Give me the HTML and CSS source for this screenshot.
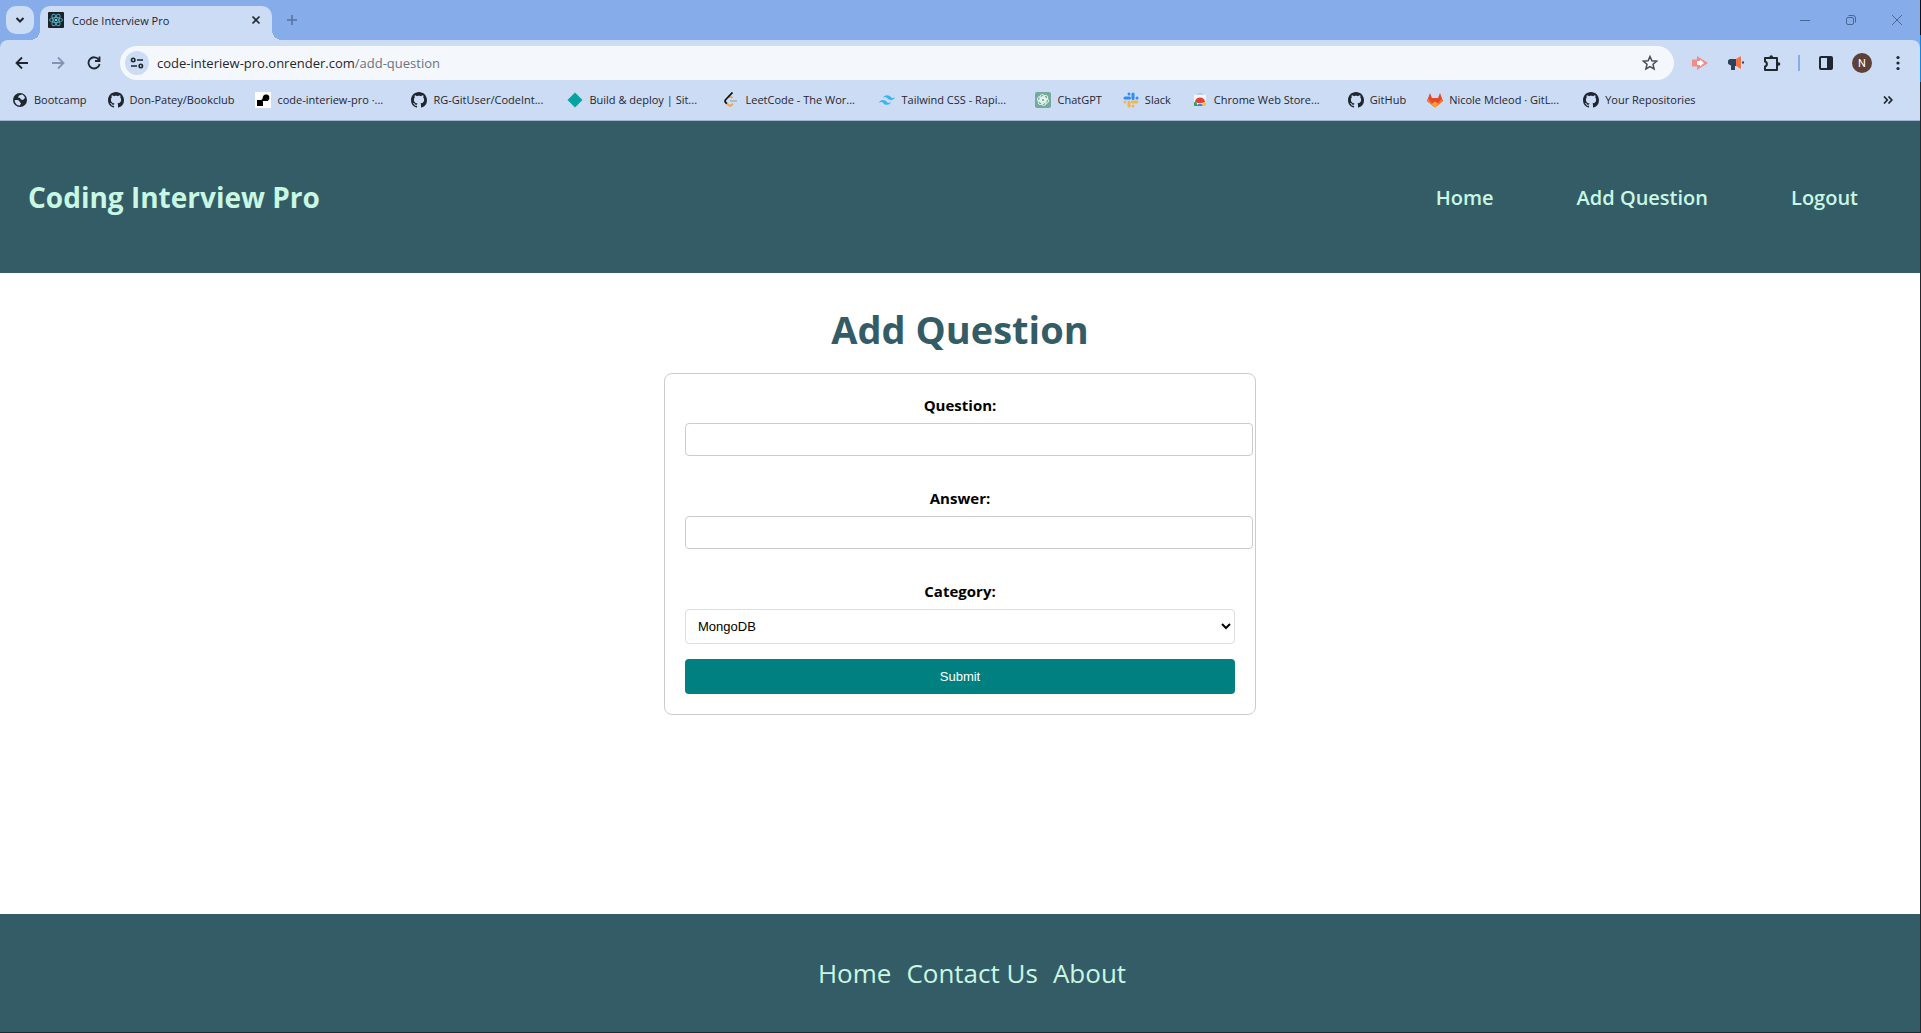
FILE: index.html
```html
<!DOCTYPE html>
<html lang="en">
<head>
<meta charset="utf-8">
<title>Code Interview Pro</title>
<link rel="stylesheet" href="styles.css">
</head>
<body>
<svg class="defs" aria-hidden="true">
  <symbol id="github" viewBox="0 0 16 16"><path fill="#1f2630" d="M8 0c4.42 0 8 3.58 8 8a8.013 8.013 0 0 1-5.45 7.59c-.4.08-.55-.17-.55-.38 0-.27.01-1.13.01-2.2 0-.75-.25-1.23-.54-1.48 1.78-.2 3.65-.88 3.65-3.95 0-.88-.31-1.59-.82-2.15.08-.2.36-1.02-.08-2.12 0 0-.67-.22-2.2.82-.64-.18-1.32-.27-2-.27-.68 0-1.36.09-2 .27-1.53-1.03-2.2-.82-2.2-.82-.44 1.1-.16 1.92-.08 2.12-.51.56-.82 1.28-.82 2.15 0 3.06 1.86 3.75 3.64 3.95-.23.2-.44.55-.51 1.07-.46.21-1.61.55-2.33-.66-.15-.24-.6-.83-1.23-.82-.67.01-.27.38.01.53.34.19.73.9.82 1.13.16.45.68 1.31 2.69.94 0 .67.01 1.3.01 1.49 0 .21-.15.45-.55.38A7.995 7.995 0 0 1 0 8c0-4.42 3.58-8 8-8Z"/></symbol>
</svg>

<div class="browser">
  <div class="tabstrip">
    <button class="tab-search" aria-label="Search tabs"><svg width="10" height="10" viewBox="0 0 10 10"><path d="M1.5 3 5 6.500 8.500 3" fill="none" stroke="#1f2630" stroke-width="2"/></svg></button>
    <div class="tab">
      <svg width="16" height="16" viewBox="0 0 16 16"><rect width="16" height="16" rx="1" fill="#1c2127"/><g fill="none" stroke="#4fa9bd" stroke-width="1"><ellipse cx="8" cy="8" rx="6.500" ry="2.500"/><ellipse cx="8" cy="8" rx="6.500" ry="2.500" transform="rotate(60 8 8)"/><ellipse cx="8" cy="8" rx="6.500" ry="2.500" transform="rotate(120 8 8)"/></g><circle cx="8" cy="8" r="1.300" fill="#6fd3e8"/></svg>
      <span class="tab-title">Code Interview Pro</span>
      <button class="icon-button" aria-label="Close tab"><svg width="10" height="10" viewBox="0 0 10 10"><path d="M1.500 1.500l7 7M8.500 1.500l-7 7" stroke="#1f2630" stroke-width="1.600"/></svg></button>
    </div>
    <button class="icon-button new-tab" aria-label="New tab"><svg width="10" height="10" viewBox="0 0 10 10"><path d="M5 0v10M0 5h10" stroke="#56749f" stroke-width="1.500"/></svg></button>
    <div class="window-controls">
      <button class="icon-button" aria-label="Minimize"><svg width="10" height="10" viewBox="0 0 10 10"><path d="M0 5.500h10" stroke="#4a6694"/></svg></button>
      <button class="icon-button" aria-label="Restore"><svg width="10" height="10" viewBox="0 0 10 10" fill="none" stroke="#4a6694"><rect x=".5" y="2.500" width="7" height="7" rx="1.500"/><path d="M2.500.5H7A2.500 2.500 0 0 1 9.500 3v4.500"/></svg></button>
      <button class="icon-button" aria-label="Close"><svg width="10" height="10" viewBox="0 0 10 10"><path d="M0 0l10 10M10 0 0 10" stroke="#4a6694"/></svg></button>
    </div>
  </div>

  <div class="toolbar">
    <div class="nav-buttons">
      <button class="icon-button" aria-label="Back"><svg width="14" height="14" viewBox="0 0 14 14"><path d="M13 7H2M7 1.500 1.500 7 7 12.500" fill="none" stroke="#1f2630" stroke-width="1.800"/></svg></button>
      <button class="icon-button" aria-label="Forward"><svg width="14" height="14" viewBox="0 0 14 14"><path d="M1 7h11M7 1.500 12.500 7 7 12.500" fill="none" stroke="#8394b2" stroke-width="1.800"/></svg></button>
      <button class="icon-button" aria-label="Reload"><svg width="14" height="14" viewBox="0 0 14 14"><path d="M11.800 3.800A5.600 5.600 0 1 0 12.600 8M12.500 0.500v4.500H8" fill="none" stroke="#1f2630" stroke-width="1.800"/></svg></button>
    </div>
    <div class="omnibox">
      <button class="site-info" aria-label="Site information"><svg width="14" height="12" viewBox="0 0 14 12" fill="none" stroke="#1f2630" stroke-width="1.600"><circle cx="3.200" cy="3" r="1.700"/><path d="M7 3h6M1 9h6"/><circle cx="10.800" cy="9" r="1.700"/></svg></button>
      <span class="url">code-interiew-pro.onrender.com<span class="url-path">/add-question</span></span>
      <button class="icon-button" aria-label="Bookmark this tab"><svg width="16" height="16" viewBox="0 0 16 16"><path d="M8 1.500l1.900 4.300 4.700.4-3.600 3.100 1.100 4.600L8 11.500l-4.100 2.400L5 9.300 1.400 6.200l4.700-.4z" fill="none" stroke="#454c57" stroke-width="1.500"/></svg></button>
    </div>
    <div class="extensions">
      <button class="icon-button" aria-label="Screen recorder"><svg width="16" height="14" viewBox="0 0 16 14"><path d="M5 0l11 7-11 7v-3.500H0v-7h5z" fill="#f48b8a"/><path d="M5 5h3V3.500L12 7l-4 3.500V9H5z" fill="#fff"/></svg></button>
      <button class="icon-button" aria-label="Announcements"><svg width="16" height="16" viewBox="0 0 16 16"><path d="M8 4H3a3 3 0 0 0-2 5.500l2 1V15h4v-4h1z" fill="#2d405c"/><path d="M8 4l5-3v13l-5-3z" fill="#fb6f42"/><path d="M13 1h1v13h-1z" fill="#e8eaf0"/><path d="M14 6.500h2v2h-2z" fill="#2d405c"/></svg></button>
      <button class="icon-button" aria-label="Extensions"><svg width="18" height="18" viewBox="0 0 18 18"><path d="M2 4h12v12H2v-3.500c2.500-.5 2.500-4.500 0-5z" fill="none" stroke="#1f2630" stroke-width="2" stroke-linejoin="round"/><circle cx="8.200" cy="3" r="1.800" fill="#1f2630"/><circle cx="15.500" cy="10" r="1.800" fill="#1f2630"/></svg></button>
      <span class="divider"></span>
      <button class="icon-button" aria-label="Side panel"><svg width="14" height="14" viewBox="0 0 14 14"><rect x="1" y="1" width="12" height="12" rx="1" fill="none" stroke="#1f2630" stroke-width="2"/><path d="M8 1h5v12H8z" fill="#1f2630"/></svg></button>
      <button class="avatar" aria-label="Profile">N</button>
      <button class="icon-button" aria-label="Menu"><svg width="4" height="16" viewBox="0 0 4 16" fill="#1f2630"><circle cx="2" cy="2.500" r="1.600"/><circle cx="2" cy="8" r="1.600"/><circle cx="2" cy="13.500" r="1.600"/></svg></button>
    </div>
  </div>

  <nav class="bookmarks" aria-label="Bookmarks">
    <a href="#"><svg viewBox="0 0 16 16"><circle cx="8" cy="8" r="7" fill="#1f2630"/><path d="M2.500 8.500c2-.8 4-.5 4.800.5s.2 1.500 1.700 2L8 13.500c-3 0-5-2-5.500-5zM6 5.500l1-2 3-1c1.500.5 2.800 2 3 3.500l-2 2-2-.5-1-1.500z" fill="#ccdcf5"/></svg>Bootcamp</a>
    <a href="#"><svg><use href="#github"/></svg>Don-Patey/Bookclub</a>
    <a class="clipped" href="#"><svg viewBox="0 0 16 16"><path fill="#fff" d="M0 0h16v16H0z"/><path fill="#000" d="M2 8h3.500c2 0 2-1.500 2.300-2.700A3.300 3.300 0 1 1 11 9H8v5H2z"/></svg>code-interiew-pro ·...</a>
    <a class="clipped" href="#"><svg><use href="#github"/></svg>RG-GitUser/CodeInt...</a>
    <a class="clipped" href="#"><svg viewBox="0 0 16 16"><path fill="#05a4a0" d="M8 .5 15.500 8 8 15.500.5 8z"/></svg>Build &amp; deploy | Sit...</a>
    <a class="clipped" href="#"><svg viewBox="0 0 16 16" fill="none" stroke-width="1.800"><path d="M10 11.500 8.700 13c-1 1-2.200 1-3.200 0L3.400 11" stroke="#f3a73b"/><path d="M6 5.500c1-1 2-1 3.500.5" stroke="#f3a73b"/><path d="M9.500.5 2.800 7.500c-1 1-1 2.200 0 3.200l1 1" stroke="#111"/><path d="M7 9h7" stroke="#b3b6bb"/></svg>LeetCode - The Wor...</a>
    <a class="clipped" href="#"><svg viewBox="0 0 24 24"><path fill="#38b6f0" d="M12 4.800c-3.200 0-5.200 1.600-6 4.800 1.200-1.600 2.600-2.200 4.200-1.800.9.200 1.600.9 2.300 1.700C13.700 10.700 15.100 12 18 12c3.200 0 5.200-1.600 6-4.800-1.200 1.600-2.600 2.200-4.200 1.800-.9-.2-1.600-.9-2.300-1.700C16.300 6.100 14.900 4.800 12 4.800zM6 12c-3.200 0-5.200 1.600-6 4.800 1.200-1.600 2.600-2.200 4.200-1.800.9.200 1.600.9 2.300 1.700C7.700 17.900 9.100 19.200 12 19.200c3.200 0 5.200-1.600 6-4.800-1.200 1.600-2.600 2.200-4.200 1.800-.9-.2-1.600-.9-2.300-1.700C10.300 13.300 8.900 12 6 12z"/></svg>Tailwind CSS - Rapi...</a>
    <a href="#"><svg viewBox="0 0 16 16"><rect width="16" height="16" rx="2" fill="#74aa9c"/><g fill="none" stroke="#e8f5f0" stroke-width=".9"><rect x="5" y="2.500" width="4.500" height="8" rx="2.200"/><rect x="5" y="2.500" width="4.500" height="8" rx="2.200" transform="rotate(60 8 8)"/><rect x="5" y="2.500" width="4.500" height="8" rx="2.200" transform="rotate(120 8 8)"/><rect x="5" y="2.500" width="4.500" height="8" rx="2.200" transform="rotate(180 8 8)"/><rect x="5" y="2.500" width="4.500" height="8" rx="2.200" transform="rotate(240 8 8)"/><rect x="5" y="2.500" width="4.500" height="8" rx="2.200" transform="rotate(300 8 8)"/></g></svg>ChatGPT</a>
    <a href="#"><svg viewBox="0 0 16 16" fill="none" stroke-width="3" stroke-linecap="round"><path stroke="#2d8cf5" d="M6 2v.1M10 2v4.500M6.500 6H2M14 6v.1"/><path stroke="#f1b54a" d="M9.500 10H14M2 10v.1M6 10v4M10 14v.1"/></svg>Slack</a>
    <a class="clipped" href="#"><svg viewBox="0 0 16 16"><path d="M6 3V1.500h4V3" fill="none" stroke="#b9c0cb"/><path fill="#f5f6f8" d="M2 3h12v11H2z"/><path fill="#e0433a" d="M3 10a5 4.500 0 0 1 10 0l-3 1H6z"/><path fill="#35a455" d="M2 10.500v3.500h4l-2-4.500z"/><path fill="#fbc52f" d="M14 10.500v3.500H9l3-4z"/><path fill="#3d7de8" d="M5.500 14a2.500 2.500 0 0 1 5 0z"/></svg>Chrome Web Store...</a>
    <a href="#"><svg><use href="#github"/></svg>GitHub</a>
    <a class="clipped" href="#"><svg viewBox="0 0 16 16"><path fill="#e8472c" d="M3 1 5 6h6l2-5 3 8-8 6.500L0 9z"/><path fill="#fb7a2b" d="M0 9l1-2.500L8 15.500l7-9L16 9l-8 6.500z"/><path fill="#fca429" d="M4.500 12 8 9.500l3.500 2.500L8 15.500z"/></svg>Nicole Mcleod · GitL...</a>
    <a href="#"><svg><use href="#github"/></svg>Your Repositories</a>
    <button class="icon-button overflow" aria-label="More bookmarks"><svg width="10" height="8" viewBox="0 0 10 8"><path d="M1 .5 4.300 4 1 7.500M5.500.5 8.800 4 5.500 7.500" fill="none" stroke="#1f2630" stroke-width="1.700"/></svg></button>
  </nav>
</div>

<header class="site-header">
  <div class="brand">Coding Interview Pro</div>
  <nav class="site-nav" aria-label="Main">
    <a href="#">Home</a>
    <a href="#">Add Question</a>
    <a href="#">Logout</a>
  </nav>
</header>

<main>
  <h1>Add Question</h1>
  <form class="question-form">
    <label for="question">Question:</label>
    <input id="question" type="text">
    <label for="answer">Answer:</label>
    <input id="answer" type="text">
    <label for="category">Category:</label>
    <select id="category"><option>MongoDB</option></select>
    <button class="submit" type="submit">Submit</button>
  </form>
</main>

<footer class="site-footer">
  <a href="#">Home</a>
  <a href="#">Contact Us</a>
  <a href="#">About</a>
</footer>
</body>
</html>
```
FILE: styles.css
```css
* {
  box-sizing: border-box;
}

body {
  display: flex;
  flex-direction: column;
  min-height: 100vh;
  margin: 0;
  padding: 0 1px 1px 0;
  background: linear-gradient(#111 35px, #0a84e8 35px 82px, #22282c 82px);
  font-family: "Open Sans", "Noto Sans", sans-serif;
}

a {
  color: inherit;
  text-decoration: none;
}

.defs {
  display: none;
}

/* Browser window */

.browser {
  background: #86ace9;
  color: #1f2630;
  font-size: 11px;
  border-bottom: 1px solid #9fb4cc;
}

.browser button {
  display: flex;
  align-items: center;
  justify-content: center;
  flex: none;
  padding: 0;
  border: 0;
  background: none;
}

.browser svg {
  flex: none;
}

.browser .icon-button {
  width: 20px;
  height: 20px;
}

.tabstrip {
  display: flex;
  align-items: center;
  height: 40px;
  padding-left: 6px;
}

.browser .tab-search {
  width: 28px;
  height: 28px;
  border-radius: 10px;
  background: #ccdcf5;
}

.tab {
  position: relative;
  display: flex;
  align-items: center;
  align-self: flex-end;
  gap: 8px;
  width: 232px;
  height: 34px;
  margin-left: 6px;
  padding: 0 6px 6px 8px;
  border-radius: 10px 10px 0 0;
  background: #ccdcf5;
}

.tab::before,
.tab::after {
  content: "";
  position: absolute;
  bottom: 0;
  width: 10px;
  height: 10px;
}

.tab::before {
  right: 100%;
  background: radial-gradient(circle at 0 0, transparent 10px, #ccdcf5 10px);
}

.tab::after {
  left: 100%;
  background: radial-gradient(circle at 100% 0, transparent 10px, #ccdcf5 10px);
}

.tab-title {
  flex: 1;
}

.new-tab {
  margin-left: 10px;
}

.window-controls {
  display: flex;
  gap: 26px;
  margin-left: auto;
  padding-right: 13px;
}

.toolbar {
  display: flex;
  align-items: center;
  height: 46px;
  padding: 0 12px;
  border-radius: 8px 8px 0 0;
  background: #ccdcf5;
}

.nav-buttons {
  display: flex;
  gap: 16px;
  width: 108px;
}

.omnibox {
  display: flex;
  flex: 1;
  align-items: center;
  gap: 8px;
  height: 34px;
  padding: 0 14px 0 5px;
  border-radius: 17px;
  background: #f4f8fd;
}

.browser .site-info {
  width: 24px;
  height: 24px;
  border-radius: 50%;
  background: #ccdcf5;
}

.url {
  flex: 1;
  font-size: 13px;
}

.url-path {
  color: #6b727d;
}

.extensions {
  display: flex;
  align-items: center;
  gap: 16px;
  padding-left: 16px;
}

.divider {
  width: 2px;
  height: 16px;
  background: #86ace9;
}

.browser .avatar {
  width: 20px;
  height: 20px;
  border-radius: 50%;
  background: #5d4037;
  color: #fff;
  font: 11px Roboto, sans-serif;
}

.bookmarks {
  display: flex;
  align-items: center;
  gap: 21px;
  height: 34px;
  padding: 0 22px 7px 12px;
  background: #ccdcf5;
  white-space: nowrap;
}

.bookmarks a {
  display: flex;
  align-items: center;
  gap: 6px;
}

.bookmarks a svg {
  width: 16px;
  height: 16px;
}

.bookmarks .clipped {
  width: 135px;
}

.overflow {
  margin-left: auto;
}

/* Site */

.site-header {
  display: flex;
  align-items: center;
  justify-content: space-between;
  min-height: 152px;
  padding: 0 62px 0 28px;
  background: #345c66;
  color: #c8f7e3;
}

.brand {
  font-size: 28px;
  font-weight: 700;
}

.site-nav {
  display: flex;
  gap: 83px;
  font-size: 20px;
  font-weight: 600;
}

main {
  flex: 1;
  background: #fff;
}

h1 {
  margin: 28px 0 16px;
  color: #345c66;
  font-size: 38px;
  line-height: 56px;
  text-align: center;
}

.question-form {
  display: flex;
  flex-direction: column;
  max-width: 592px;
  margin: 0 auto;
  padding: 19px 20px 20px;
  border: 1px solid #ccc;
  border-radius: 8px;
}

.question-form label {
  margin-bottom: 6px;
  font-size: 15px;
  font-weight: 700;
  line-height: 24px;
  text-align: center;
}

.question-form input,
.question-form select,
.submit {
  border: 1px solid #ccc;
  border-radius: 4px;
  font: 13px "Liberation Sans", Arial, sans-serif;
}

/* Text boxes keep their padding outside the column width */
.question-form input {
  box-sizing: content-box;
  width: 100%;
  height: 15px;
  margin-bottom: 30px;
  padding: 8px;
}

.question-form select {
  height: 35px;
  margin-bottom: 15px;
  padding: 8px;
  border-color: #ddd;
  background: #fff;
  color: #000;
}

.submit {
  height: 35px;
  border: 0;
  background: #008080;
  color: #fff;
}

.site-footer {
  display: flex;
  align-items: center;
  justify-content: center;
  gap: 15px;
  min-height: 118px;
  padding-left: 24px;
  background: #345c66;
  color: #c8f7e3;
  font-size: 26px;
}
```
